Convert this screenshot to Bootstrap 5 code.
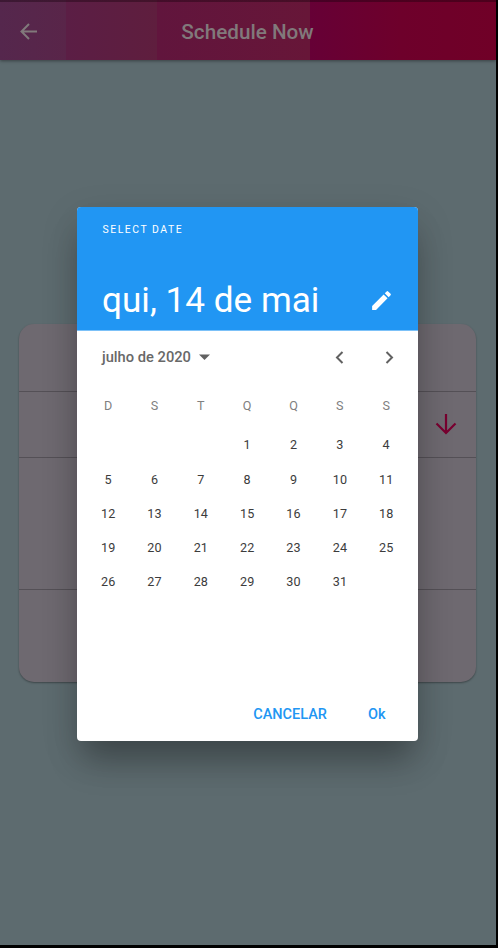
<!DOCTYPE html>
<html lang="pt-BR">
<head>
<meta charset="utf-8">
<meta name="viewport" content="width=device-width, initial-scale=1">
<title>Schedule Now</title>
<link href="https://cdn.jsdelivr.net/npm/bootstrap@5.3.0/dist/css/bootstrap.min.css" rel="stylesheet">
<style>
body{background:#000;font-family:Roboto,"Liberation Sans",sans-serif;height:948px}
.screen{width:496px;height:945px;background:#5d6b6f}
.topbar{height:60px;padding:3px 21px 0 20px;background:linear-gradient(rgba(20,0,10,.38) 0 2px,transparent 2px),linear-gradient(90deg,#55274d 0,#592549 66px,#5b1e45 66px,#5f1e3e 157px,#61153d 157px,#671638 310px,#660036 310px,#6e002b 400px,#700027 496px);box-shadow:0 1px 3px rgba(0,0,0,.4)}
.topbar h1{font-size:20.7px;font-weight:500;color:#81797b;margin:0;line-height:24px}
.topbar .side{width:18px}
.form-panel{margin:264px 20px 0 19px;height:358px;border-radius:15px;background:#6e6970;box-shadow:0 1px 2px rgba(0,0,0,.35)}
.form-panel>div{border-bottom:1px solid #545056}
.form-panel>div:last-child{border:0}
.h-a{height:68px}.h-b{height:66px;padding-right:19px;padding-bottom:1px}.h-c{height:132px}
.overlay{inset:0 2px 0 0}
.picker{width:341px;height:534px;margin-right:1px;border-radius:4px;background:#fff;box-shadow:0 25px 32px -6px rgba(0,0,0,.27),0 12px 38px 0 rgba(0,0,0,.13)}
.picker-head{height:124px;padding:16px 24px 9px 25px;background:#2196f3;border-radius:4px 4px 0 0;border-bottom:1px solid #7cc1f8}
.caption-txt{font-size:10.4px;letter-spacing:1.53px;line-height:14px;padding-left:.6px}
.date-txt{font-size:35.15px;line-height:42px;white-space:nowrap}
.month-bar{height:53px;padding:0 22px 0 25px;color:#686868}
.month-txt{font-size:14.7px;font-weight:500}
.chevrons{gap:24px;margin-right:1px}
.cal{display:grid;grid-template-columns:repeat(7,46.35px);grid-auto-rows:34.3px;margin:0 8px;text-align:center;line-height:35.6px;font-size:12.6px;letter-spacing:.15px;color:#3c3c3c}
.week{color:#808080;margin-top:5px;margin-bottom:4px;line-height:34.3px}
.actions{padding:0 32.5px 16px 0;gap:41px}
.actions button{font-size:14.5px;font-weight:500;line-height:20px;color:#2196f3;border:0;padding:0}
</style>
</head>
<body>
<div class="screen overflow-hidden">
  <header class="topbar d-flex align-items-center justify-content-between">
    <div class="side d-flex"><svg width="18" height="18" viewBox="0 0 18 18" fill="none" stroke="#81797b" stroke-width="2"><path d="M17 8.5H2M9 1 1.5 8.5 9 16"/></svg></div>
    <h1>Schedule Now</h1>
    <div class="side"></div>
  </header>
  <main class="form-panel">
    <div class="h-a"></div>
    <div class="h-b d-flex align-items-center justify-content-end">
      <svg width="22" height="22" viewBox="0 0 22 22" fill="none" stroke="#780030" stroke-width="2.2"><path d="M11 1v19M1.500 10.500 11 20l9.500-9.500"/></svg>
    </div>
    <div class="h-c"></div>
    <div></div>
  </main>
</div>
<div class="overlay position-absolute d-flex align-items-center justify-content-center">
  <section class="picker d-flex flex-column" role="dialog" aria-label="Select date">
    <div class="picker-head text-white d-flex flex-column justify-content-between">
      <div class="caption-txt">SELECT DATE</div>
      <div class="d-flex align-items-center justify-content-between">
        <div class="date-txt">qui, 14 de mai</div>
        <svg width="25" height="25" viewBox="0 0 24 24" fill="#fff"><path d="M3 17.250V21h3.750L17.810 9.940l-3.750-3.750L3 17.250zM20.710 7.040a1 1 0 0 0 0-1.410l-2.340-2.340a1 1 0 0 0-1.410 0l-1.830 1.830 3.750 3.750 1.830-1.830z"/></svg>
      </div>
    </div>
    <div class="month-bar d-flex align-items-center justify-content-between">
      <div class="d-flex align-items-center gap-2"><span class="month-txt">julho de 2020</span><svg width="11" height="6" viewBox="0 0 11 6" fill="#616161"><path d="M0 .5h11L5.500 6z"/></svg></div>
      <div class="d-flex align-items-center chevrons">
        <svg width="26" height="14" viewBox="0 0 26 14" fill="none" stroke="#616161" stroke-width="2"><path d="M9.500 1 4 6.500l5.500 5.500"/></svg>
        <svg width="12" height="14" viewBox="0 0 12 14" fill="none" stroke="#616161" stroke-width="2"><path d="M3.500 1 9 6.500l-5.500 5.500"/></svg>
      </div>
    </div>
    <div class="cal week"><span>D</span><span>S</span><span>T</span><span>Q</span><span>Q</span><span>S</span><span>S</span></div>
    <div class="cal">
      <span></span><span></span><span></span><span>1</span><span>2</span><span>3</span><span>4</span>
      <span>5</span><span>6</span><span>7</span><span>8</span><span>9</span><span>10</span><span>11</span>
      <span>12</span><span>13</span><span>14</span><span>15</span><span>16</span><span>17</span><span>18</span>
      <span>19</span><span>20</span><span>21</span><span>22</span><span>23</span><span>24</span><span>25</span>
      <span>26</span><span>27</span><span>28</span><span>29</span><span>30</span><span>31</span>
    </div>
    <div class="actions mt-auto d-flex justify-content-end">
      <button class="bg-transparent" type="button">CANCELAR</button>
      <button class="bg-transparent" type="button">Ok</button>
    </div>
  </section>
</div>
<script src="https://cdn.jsdelivr.net/npm/bootstrap@5.3.0/dist/js/bootstrap.bundle.min.js"></script>
</body>
</html>
